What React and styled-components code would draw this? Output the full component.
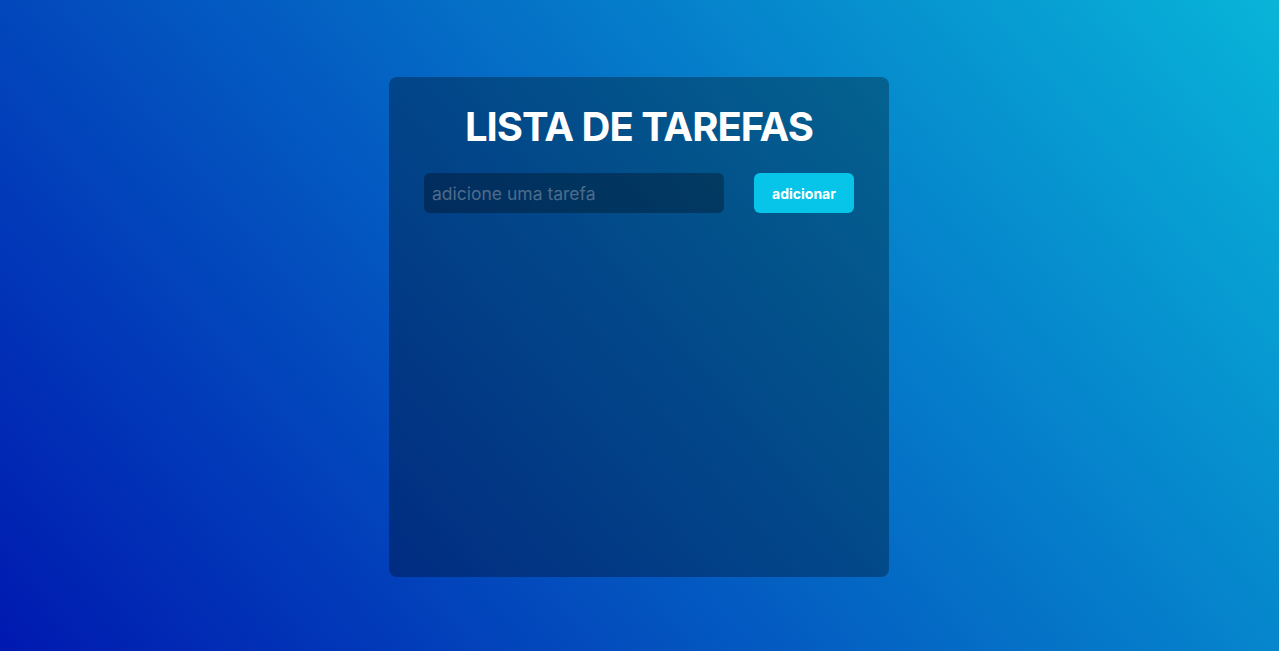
import React, { useState } from 'react';
import styled, { createGlobalStyle } from 'styled-components';

const GlobalStyle = createGlobalStyle`
* {
    margin: 0;
    padding: 0;
    box-sizing: border-box;
}

body {
    font-family: Inter, "Noto Sans", sans-serif;
}
`

function App() {
    const [tarefa, setTarefa] = useState('')
    const [tarefas, setTarefas] = useState([])

    const adicionar = () => {
        if (!tarefa.trim()) return
        setTarefas([...tarefas, tarefa])
        setTarefa('')
    }

    return (
        <Page>
            <GlobalStyle />
            <Card>
                <Title>LISTA DE TAREFAS</Title>
                <Form onSubmit={(e) => { e.preventDefault(); adicionar() }}>
                    <Input
                        placeholder="adicione uma tarefa"
                        value={tarefa}
                        onChange={(e) => setTarefa(e.target.value)}
                    />
                    <AddButton type="submit">adicionar</AddButton>
                </Form>
                <List>
                    {tarefas.map((t, i) => (
                        <Item key={i}>{t}</Item>
                    ))}
                </List>
            </Card>
        </Page>
    );
}

export default App;

const Page = styled.main`
min-height:100vh;
display:flex;
justify-content:center;
padding:77px 1px 0 0;
background:linear-gradient(50deg, #0019b0 0%, #08b4d8 100%);
`

const Card = styled.section`
width:500px;
height:500px;
border-radius:8px;
background:rgba(0, 0, 0, 0.3);
padding:25px 35px;
display:flex;
flex-direction:column;
`

const Title = styled.h1`
color:#fff;
font-size:40px;
font-weight:700;
line-height:50px;
text-align:center;
letter-spacing:-1px;
`

const Form = styled.form`
display:flex;
gap:30px;
margin-top:21px;
`

const Input = styled.input`
width:300px;
height:40px;
border:none;
outline:none;
border-radius:6px;
background:rgba(0, 0, 0, 0.3);
color:#fff;
padding:0 8px;
font-family:Inter, "Noto Sans", sans-serif;
font-size:17.5px;

&::placeholder{
    color:#4d6c8c;
}
`

const AddButton = styled.button`
width:100px;
height:40px;
border:none;
border-radius:6px;
background:#06c5e8;
color:#fff;
font-family:Inter, "Noto Sans", sans-serif;
font-size:14px;
font-weight:700;
cursor:pointer;
`

const List = styled.ul`
list-style:none;
margin-top:20px;
`

const Item = styled.li`
color:#fff;
padding:8px 0;
`
